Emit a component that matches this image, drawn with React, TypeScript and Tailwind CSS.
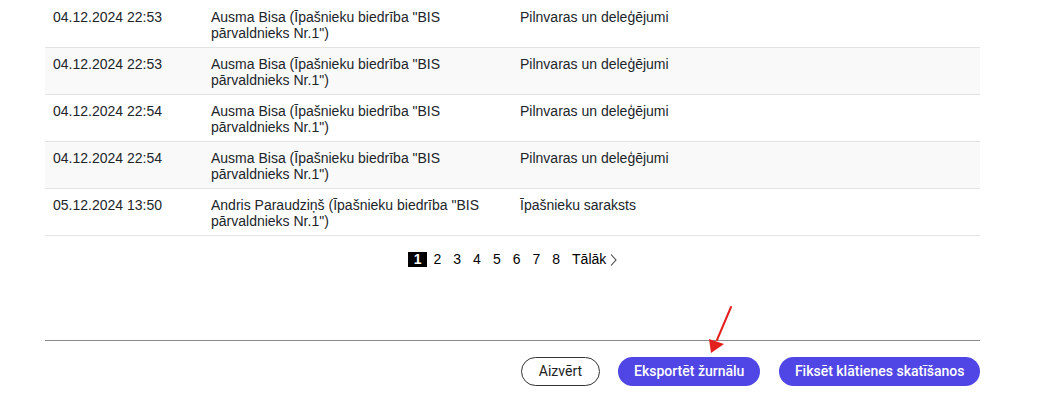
const rows = [
  { date: '04.12.2024 22:53', who: 'Ausma Bisa (Īpašnieku biedrība "BIS pārvaldnieks Nr.1")', what: 'Pilnvaras un deleģējumi' },
  { date: '04.12.2024 22:53', who: 'Ausma Bisa (Īpašnieku biedrība "BIS pārvaldnieks Nr.1")', what: 'Pilnvaras un deleģējumi' },
  { date: '04.12.2024 22:54', who: 'Ausma Bisa (Īpašnieku biedrība "BIS pārvaldnieks Nr.1")', what: 'Pilnvaras un deleģējumi' },
  { date: '04.12.2024 22:54', who: 'Ausma Bisa (Īpašnieku biedrība "BIS pārvaldnieks Nr.1")', what: 'Pilnvaras un deleģējumi' },
  { date: '05.12.2024 13:50', who: 'Andris Paraudziņš (Īpašnieku biedrība "BIS pārvaldnieks Nr.1")', what: 'Īpašnieku saraksts' },
]

const pages = [1, 2, 3, 4, 5, 6, 7, 8]

export default function App() {
  return (
    <div className="relative h-[407px] w-[1056px] overflow-hidden bg-white">
      <div className="ml-[45px] w-[935px] pt-[1px]">
        {/* Log table */}
        <div className="font-['Liberation_Sans',Arial,sans-serif] text-[14px] leading-[16px] text-[#212529]">
          {rows.map((row, i) => (
            <div
              key={i}
              className={
                'flex border-b border-[#e3e3e3] pt-[8px] pb-[6px] ' +
                (i % 2 === 1 ? 'bg-[#f9f9f9]' : 'bg-white')
              }
            >
              <div className="w-[158px] shrink-0 px-[8px]">{row.date}</div>
              <div className="w-[309px] shrink-0 px-[8px]">{row.who}</div>
              <div className="flex-1 px-[8px]">{row.what}</div>
            </div>
          ))}
        </div>

        {/* Pagination */}
        <div className="mt-[16px] flex items-center justify-center font-['Liberation_Sans',Arial,sans-serif] text-[14px] leading-[15px] text-black">
          {pages.map((p) => (
            <span
              key={p}
              className={
                'px-[6px] ' + (p === 1 ? 'bg-black font-bold text-white' : '')
              }
            >
              {p}
            </span>
          ))}
          <span className="ml-[6px] flex items-center gap-[4px]">
            Tālāk
            <svg width="7" height="14" viewBox="0 0 7 14" className="mt-[1px]">
              <polyline points="1,1.5 6,7 1,12.5" fill="none" stroke="#444" strokeWidth="1.1" />
            </svg>
          </span>
        </div>

        {/* Footer */}
        <div className="mt-[73px] border-t border-[#8a8a8a]" />
        <div className="mt-[16px] flex justify-end font-['Roboto',sans-serif] text-[14px]">
          <button className="h-[29px] rounded-full border border-[#333] px-[17px] text-[#222]">
            Aizvērt
          </button>
          <button className="ml-[18px] h-[29px] rounded-full bg-[#4f46e5] px-[16px] font-medium text-white">
            Eksportēt žurnālu
          </button>
          <button className="ml-[19px] h-[29px] rounded-full bg-[#4f46e5] px-[15.5px] font-medium text-white">
            Fiksēt klātienes skatīšanos
          </button>
        </div>
      </div>

      {/* Annotation arrow */}
      <svg className="absolute left-[700px] top-[300px]" width="40" height="60" viewBox="0 0 40 60">
        <line x1="31" y1="7" x2="17" y2="40" stroke="#e3201e" strokeWidth="2" strokeLinecap="round" />
        <polygon points="11,53 9,39 24,44" fill="#e3201e" />
      </svg>
    </div>
  )
}
